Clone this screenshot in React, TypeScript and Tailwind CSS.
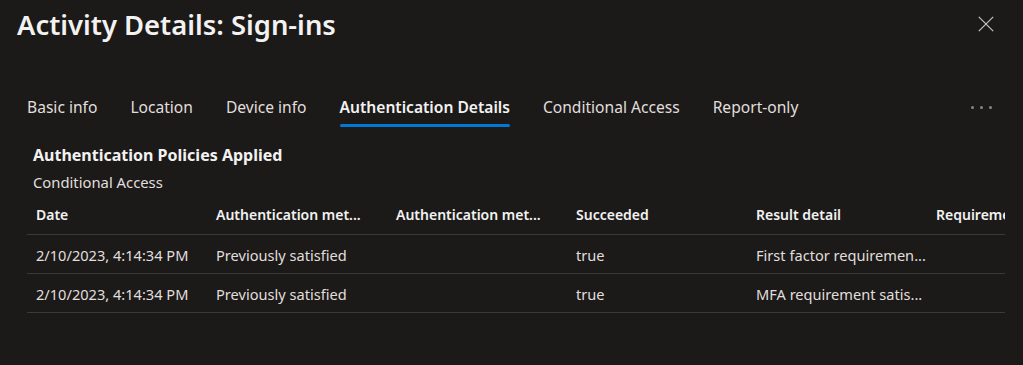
import React from "react";

const tabs = ["Basic info", "Location", "Device info", "Authentication Details", "Conditional Access", "Report-only"];
const headers = ["Date", "Authentication met...", "Authentication met...", "Succeeded", "Result detail", "Requirement"];
const rows = [
  ["2/10/2023, 4:14:34 PM", "Previously satisfied", "", "true", "First factor requiremen...", ""],
  ["2/10/2023, 4:14:34 PM", "Previously satisfied", "", "true", "MFA requirement satis...", ""],
];

export default function App() {
  return (
    <div
      className="w-[1023px] h-[365px] bg-[#1b1a19] text-[#f3f2f1] overflow-hidden"
      style={{ fontFamily: '"Noto Sans", "Open Sans", sans-serif' }}
    >
      <div className="flex items-start justify-between pl-[17px] pr-[29px] pt-[5px] h-[45px]">
        <h1 className="text-[27.4px] font-semibold leading-[40px] text-[#f3f2f1]">Activity Details: Sign-ins</h1>
        <svg width="16" height="16" viewBox="0 0 16 16" className="mt-[11px]">
          <path d="M0.8 0.8 L15.2 15.2 M15.2 0.8 L0.8 15.2" stroke="#c8c6c4" strokeWidth="1.2" fill="none" />
        </svg>
      </div>

      <div className="flex items-center pl-[27px] pr-[30px] mt-[45px] h-[36px]">
        <div className="flex gap-[33px] flex-1">
          {tabs.map((t, i) => (
            <div key={t} className="relative h-[36px] flex items-center">
              <span
                className={
                  i === 3
                    ? "text-[15.6px] font-semibold text-[#f3f2f1]"
                    : "text-[15.6px] text-[#e1dfdd]"
                }
              >
                {t}
              </span>
              {i === 3 && <div className="absolute left-0 right-0 bottom-[-1px] h-[3px] bg-[#0078d4] rounded-sm" />}
            </div>
          ))}
        </div>
        <div className="flex gap-[6px] items-center mr-[1px] -mt-[2px]">
          <span className="w-[3px] h-[3px] rounded-full bg-[#8a8886]" />
          <span className="w-[3px] h-[3px] rounded-full bg-[#8a8886]" />
          <span className="w-[3px] h-[3px] rounded-full bg-[#8a8886]" />
        </div>
      </div>

      <div className="pl-[33px] mt-[17px]">
        <div className="text-[16px] font-bold leading-[24px]">Authentication Policies Applied</div>
        <div className="text-[14.8px] leading-[24px] mt-[3px] text-[#e1dfdd]">Conditional Access</div>
      </div>

      <div className="ml-[27px] w-[978px] overflow-hidden">
        <div className="flex h-[41px] items-center border-b border-[#3b3a39]">
          {headers.map((h, i) => (
            <div key={i} className="w-[180px] shrink-0 pl-[9px] text-[14px] font-semibold whitespace-nowrap overflow-hidden">
              {h}
            </div>
          ))}
        </div>
        {rows.map((r, ri) => (
          <div key={ri} className="flex h-[39px] pt-[4px] items-center border-b border-[#3b3a39]">
            {r.map((c, i) => (
              <div key={i} className="w-[180px] shrink-0 pl-[9px] text-[14.6px] text-[#e1dfdd] whitespace-nowrap overflow-hidden">
                {c}
              </div>
            ))}
          </div>
        ))}
      </div>
    </div>
  );
}
